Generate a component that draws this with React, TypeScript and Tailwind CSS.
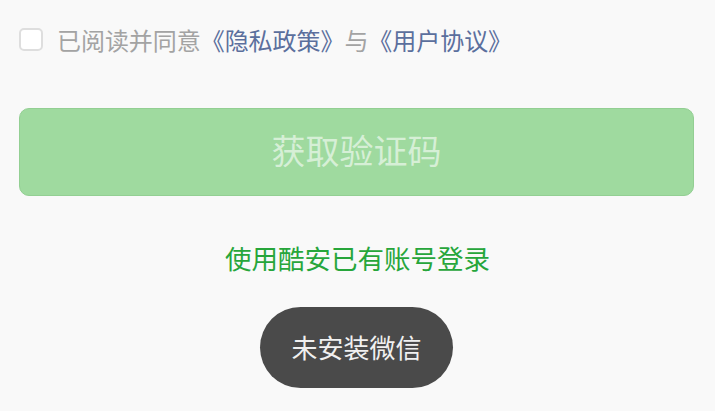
import React from 'react';

const font = { fontFamily: '"Noto Sans CJK SC", "Noto Sans", sans-serif' };

export default function App() {
  return (
    <div className="w-[715px] h-[411px] bg-[#f9f9f9] overflow-hidden" style={font}>
      <div className="px-[19px] pt-[28px]">
        <label className="flex items-center gap-[14px] h-[23px]">
          <span className="w-[24px] h-[23px] rounded-[5px] border-2 border-[#dedede] bg-white shrink-0" />
          <span className="text-[24px] leading-[24px] tracking-[-0.05px] text-[#a3a3a3] whitespace-nowrap">
            已阅读并同意<span className="text-[#5b6f9d]">《隐私政策》</span>与<span className="text-[#5b6f9d]">《用户协议》</span>
          </span>
        </label>

        <button className="mt-[57px] w-[675px] h-[88px] pb-[5px] rounded-[10px] bg-[#9fda9f] border border-[#93cf93] flex items-center justify-center text-[34px] text-[#d6efd6]">
          获取验证码
        </button>

        <div className="mt-[44px] flex justify-center">
          <span className="text-[26.5px] leading-[36px] text-[#27a63b]">使用酷安已有账号登录</span>
        </div>

        <div className="mt-[31px] flex justify-center">
          <div className="w-[193px] h-[81px] pb-[2px] rounded-full bg-[#4a4a4a] flex items-center justify-center text-[26px] text-[#f0f0f0] -translate-x-[1px]">
            未安装微信
          </div>
        </div>
      </div>
    </div>
  );
}
